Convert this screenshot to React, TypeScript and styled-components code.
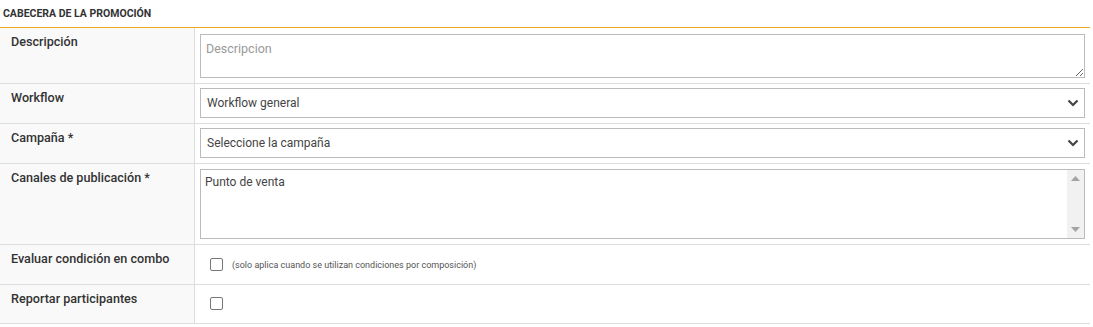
import React from "react";
import styled, { createGlobalStyle } from "styled-components";

const Global = createGlobalStyle`
  html, body { margin: 0; padding: 0; background: #fff; }
  body { font-family: Roboto, "Liberation Sans", Arial, sans-serif; color: #333; }
  * { box-sizing: border-box; }
`;

const Wrapper = styled.div`
  width: 1090px;
`;

const Header = styled.div`
  height: 28px;
  padding: 7px 3px 0;
  font-size: 10.5px;
  font-weight: 700;
  color: #333;
  text-transform: uppercase;
  border-bottom: 1px solid #f2a71b;
  line-height: 13px;
`;

const Table = styled.div`
  display: grid;
  grid-template-columns: 195px 1fr;
`;

const Label = styled.div<{ $h?: number }>`
  background: #f9f9f9;
  border-right: 1px solid #ddd;
  border-bottom: 1px solid #ddd;
  padding: 6px 11px 0;
  font-size: 12.6px;
  font-weight: 500;
  color: #333;
  line-height: 15px;
  ${(p) => (p.$h ? `height: ${p.$h}px;` : "")}
`;

const Cell = styled.div<{ $pt?: number; $pb?: number }>`
  border-bottom: 1px solid #ddd;
  padding: ${(p) => p.$pt ?? 5}px 5px ${(p) => p.$pb ?? 5}px 5px;
  display: flex;
  align-items: flex-start;
`;

const TextArea = styled.textarea`
  width: 100%;
  height: 44px;
  border: 1px solid #bbb;
  font-family: Roboto, "Liberation Sans", Arial, sans-serif;
  font-size: 12.5px;
  color: #555;
  padding: 6px 5px;
  margin: 0;
  display: block;
  outline: none;
  &::placeholder { color: #999; }
`;

const SelectBox = styled.div`
  width: 100%;
  height: 30px;
  border: 1px solid #bbb;
  display: flex;
  align-items: center;
  justify-content: space-between;
  padding: 0 5px 0 6px;
  font-size: 12px;
  color: #444;
  background: #fff;
`;

const ListBox = styled.div`
  width: 100%;
  height: 70px;
  border: 1px solid #bbb;
  display: flex;
  background: #fff;
`;

const ListItems = styled.div`
  flex: 1;
  padding: 5px 4px;
  font-size: 12px;
  color: #444;
`;

const ScrollBar = styled.div`
  width: 17px;
  background: #f1f1f1;
  display: flex;
  flex-direction: column;
  justify-content: space-between;
  align-items: center;
  padding: 6px 0;
`;

const Check = styled.span`
  display: inline-block;
  width: 13px;
  height: 13px;
  border: 1px solid #777;
  border-radius: 2px;
  background: #fff;
  flex: none;
`;

const CheckRow = styled.div`
  display: flex;
  align-items: center;
  gap: 9px;
  padding-left: 10px;
`;

const Note = styled.span`
  font-size: 9px;
  color: #555;
`;

const Chevron = () => (
  <svg width="12" height="8" viewBox="0 0 12 8">
    <path d="M1.5 1.5 L6 6 L10.5 1.5" fill="none" stroke="#444" strokeWidth="2.2" />
  </svg>
);

export default function App() {
  return (
    <Wrapper>
      <Global />
      <Header>Cabecera de la promoción</Header>
      <Table>
        <Label>Descripción</Label>
        <Cell $pt={6}>
          <TextArea placeholder="Descripcion" />
        </Cell>

        <Label>Workflow</Label>
        <Cell $pt={4}>
          <SelectBox>
            <span>Workflow general</span>
            <Chevron />
          </SelectBox>
        </Cell>

        <Label>Campaña *</Label>
        <Cell $pt={4}>
          <SelectBox>
            <span>Seleccione la campaña</span>
            <Chevron />
          </SelectBox>
        </Cell>

        <Label>Canales de publicación *</Label>
        <Cell>
          <ListBox>
            <ListItems>Punto de venta</ListItems>
            <ScrollBar>
              <svg width="9" height="5" viewBox="0 0 9 5"><path d="M0 5 L4.5 0 L9 5Z" fill="#a3a3a3" /></svg>
              <svg width="9" height="5" viewBox="0 0 9 5"><path d="M0 0 L4.5 5 L9 0Z" fill="#a3a3a3" /></svg>
            </ScrollBar>
          </ListBox>
        </Cell>

        <Label $h={40}>Evaluar condición en combo</Label>
        <Cell $pt={13}>
          <CheckRow>
            <Check />
            <Note>(solo aplica cuando se utilizan condiciones por composición)</Note>
          </CheckRow>
        </Cell>

        <Label $h={39}>Reportar participantes</Label>
        <Cell $pt={12}>
          <CheckRow>
            <Check />
          </CheckRow>
        </Cell>
      </Table>
    </Wrapper>
  );
}
